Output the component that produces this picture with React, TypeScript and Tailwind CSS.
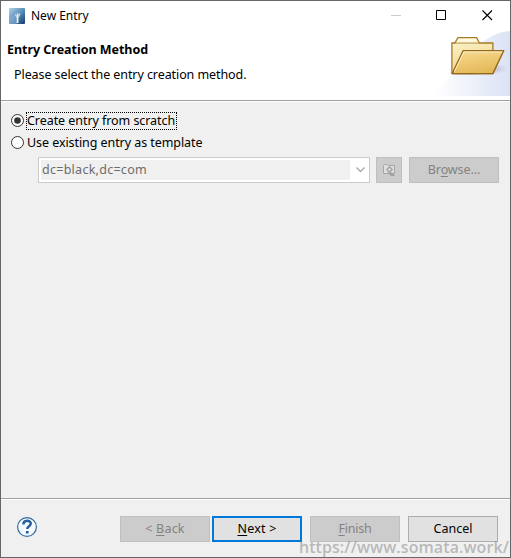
import React from "react";

function AppIcon() {
  return (
    <svg width="16" height="16" viewBox="0 0 16 16">
      <defs>
        <linearGradient id="app" x1="0" y1="0" x2="1" y2="1">
          <stop offset="0" stopColor="#b4d2e6" />
          <stop offset="0.5" stopColor="#5b90bb" />
          <stop offset="1" stopColor="#12396e" />
        </linearGradient>
      </defs>
      <rect width="16" height="16" rx="1" fill="url(#app)" />
      <path d="M0 16V9l6-1 2 8z" fill="#8db4d2" opacity=".5" />
      <path d="M8.5 15V7" stroke="#f0f6fa" strokeWidth="1.8" />
      <path d="M8 9 6 6.5M9 9l2-3.5M8.5 7V5" stroke="#d5e5f0" strokeWidth="1.6" opacity=".75" />
    </svg>
  );
}

function FolderBanner() {
  return (
    <svg width="75" height="66" viewBox="0 0 75 66" className="block">
      <defs>
        <linearGradient id="sky" x1="0" y1="0" x2="1" y2="0">
          <stop offset="0" stopColor="#fff" />
          <stop offset="1" stopColor="#dae2f5" />
        </linearGradient>
        <linearGradient id="back" x1="0" y1="0" x2="0.3" y2="1">
          <stop offset="0" stopColor="#fdf6d2" />
          <stop offset="1" stopColor="#f0d587" />
        </linearGradient>
        <linearGradient id="front" x1="0" y1="0" x2="0.4" y2="1">
          <stop offset="0" stopColor="#f6db98" />
          <stop offset="0.5" stopColor="#efcb75" />
          <stop offset="1" stopColor="#e3b95c" />
        </linearGradient>
        <radialGradient id="shade">
          <stop offset="0" stopColor="#806a70" stopOpacity=".55" />
          <stop offset="1" stopColor="#a3a0b8" stopOpacity="0" />
        </radialGradient>
      </defs>
      <path d="M0 66V60C28 40 42 3 75 1V66Z" fill="url(#sky)" />
      <ellipse cx="52" cy="39" rx="21" ry="6" fill="url(#shade)" />
      <ellipse cx="31" cy="43.5" rx="19" ry="2" fill="url(#shade)" />
      <g transform="translate(-.6 0)">
        <path d="M17.5 43.5V13h3l3-5.3h18.8L45 13h13.5v30.5Z" fill="url(#back)" stroke="#a47a28" strokeWidth="1.3" strokeLinejoin="round" />
        <path d="M20 13h25" stroke="#a9853a" />
        <path d="M22 12.3 24.4 8.8h17l2 3.5z" fill="#fff8dc" />
        <path d="M17.8 43.6 28.7 20.7h40.6L58.5 43.6Z" fill="url(#front)" stroke="#94691e" strokeWidth="1.4" strokeLinejoin="round" />
        <path d="M20 41.5 29.5 21.9H68" stroke="#fff4cd" fill="none" />
      </g>
    </svg>
  );
}

function Radio({ checked }: { checked?: boolean }) {
  return (
    <svg width="14" height="14" viewBox="0 0 14 14" className="shrink-0">
      <circle cx="7.5" cy="6.5" r="6" fill="#fff" stroke="#333" strokeWidth="1" />
      {checked && <circle cx="7.5" cy="6.5" r="3.3" fill="#333" />}
    </svg>
  );
}

function Key({ children }: { children: string }) {
  return <span className="underline decoration-1 underline-offset-2">{children}</span>;
}

export default function App() {
  return (
    <div className="relative flex h-[558px] w-[511px] flex-col overflow-hidden border border-[#666] bg-[#f0f0f0] font-['Noto_Sans','Open_Sans',sans-serif] text-[12.5px] leading-[18px] text-black">
      <header className="flex h-[29px] shrink-0 items-center bg-white pl-2">
        <AppIcon />
        <span className="ml-[6px] w-[70px] whitespace-nowrap text-[12px]">New Entry</span>
        <svg width="102" height="11" viewBox="0 0 102 11" className="ml-auto mr-[17px]" fill="none">
          <path d="M0 5.5h10" stroke="#ccc" />
          <path d="M45.5 .5h9v9h-9z" stroke="#000" />
          <path d="m91.5.5 9.5 9.5m0-9.5-9.5 9.5" stroke="#000" strokeWidth="1.1" />
        </svg>
      </header>

      <section className="flex h-[70px] shrink-0 bg-white pl-[6px]">
        <div className="flex-1 whitespace-nowrap pt-[11px]">
          <h1 className="text-[12.5px] font-bold leading-[18px] tracking-[-0.03px]">Entry Creation Method</h1>
          <p className="ml-[7px] mt-[7px] tracking-[-0.08px]">Please select the entry creation method.</p>
        </div>
        <FolderBanner />
      </section>
      <div className="h-[2px] shrink-0 border-b border-t border-b-white border-t-[#a0a0a0]" />

      <main className="flex-1 pl-[9px] pt-[10px]">
        <div className="flex h-[18px] items-center">
          <Radio checked />
          <span className="ml-[2px] flex h-[18px] w-[151px] items-center whitespace-nowrap border border-dotted border-black pb-px tracking-[-0.06px]">
            Create entry from scratch
          </span>
        </div>
        <div className="mt-[4px] flex h-[18px] items-center">
          <Radio />
          <span className="ml-[3px] whitespace-nowrap pb-px tracking-[-0.07px]">Use existing entry as template</span>
        </div>
        <div className="ml-[28px] mt-[5px] flex h-[26px] text-[#838383]">
          <div className="flex w-[332px] items-center border border-[#ccc] bg-white p-[2px]">
            <div className="flex h-5 w-[309px] items-center bg-[#f0f0f0] pb-px pl-[1px] tracking-[0.27px] text-[#6d6d6d]">dc=black,dc=com</div>
            <svg width="9" height="6" viewBox="0 0 9 6" className="ml-[6px]" fill="none">
              <path d="m.5.5 4 4 4-4" stroke="#aaa" strokeWidth="1.4" />
            </svg>
          </div>
          <div className="ml-[6px] flex w-[26px] items-center justify-center border border-[#bfbfbf] bg-[#ccc]">
            <svg width="14" height="14" viewBox="0 0 14 14" fill="none">
              <path d="M1.5 10.5v-8l1-1h3l1 1h6v8z" fill="#dedede" stroke="#a6a6a6" />
              <path d="m7.5 3 3.5 3.5L7.5 10 4 6.5z" fill="#a0a0a0" />
              <path d="m7.5 4.9 1.6 1.6-1.6 1.6-1.6-1.6z" fill="#e6e6e6" />
              <path d="M5 9.5h5l3 3.5H9z" fill="#a0a0a0" />
            </svg>
          </div>
          <div className="ml-[7px] flex w-[90px] items-center justify-center border border-[#bfbfbf] bg-[#ccc] tracking-[-0.1px]">
            <span>Br<Key>o</Key>wse...</span>
          </div>
        </div>
      </main>

      <div className="h-[2px] shrink-0 border-b border-t border-b-white border-t-[#a0a0a0]" />
      <footer className="flex h-[57px] shrink-0 items-start pl-[15px] pt-4">
        <svg width="22" height="22" viewBox="0 0 22 22" fill="none">
          <circle cx="11" cy="11" r="9.4" fill="#f5faff" stroke="#346a9f" strokeWidth="1.2" />
          <path d="M7.4 8.5C7.4 3.5 14.8 3.8 14.8 7.6c0 2.6-3.6 2.6-3.6 5.3" stroke="#275d99" strokeWidth="2.4" />
          <path d="M9.9 15h2.7v2.5H9.9z" fill="#275d99" />
        </svg>
        <div className="ml-[82px] flex h-[26px] w-[90px] items-center justify-center border border-[#bfbfbf] bg-[#ccc] pb-px tracking-[0.2px] text-[#838383]">
          <span>&lt; <Key>B</Key>ack</span>
        </div>
        <div className="ml-[2px] flex h-[26px] w-[90px] items-center justify-center border-2 border-[#0078d7] bg-[#e1e1e1] pb-px tracking-[0.2px]">
          <span><Key>N</Key>ext &gt;</span>
        </div>
        <div className="ml-[8px] flex h-[26px] w-[90px] items-center justify-center border border-[#bfbfbf] bg-[#ccc] pb-px tracking-[-0.2px] text-[#838383]">
          <span><Key>F</Key>inish</span>
        </div>
        <div className="ml-[8px] flex h-[26px] w-[90px] items-center justify-center border border-[#adadad] bg-[#e1e1e1] pb-px">
          <span>Cancel</span>
        </div>
      </footer>
      <div className="absolute -bottom-px right-[1px] whitespace-nowrap font-['Open_Sans',sans-serif] text-[16px] font-semibold leading-[21px] tracking-[0.08px] text-[#888]/55">
        https://www.somata.work/
      </div>
    </div>
  );
}
